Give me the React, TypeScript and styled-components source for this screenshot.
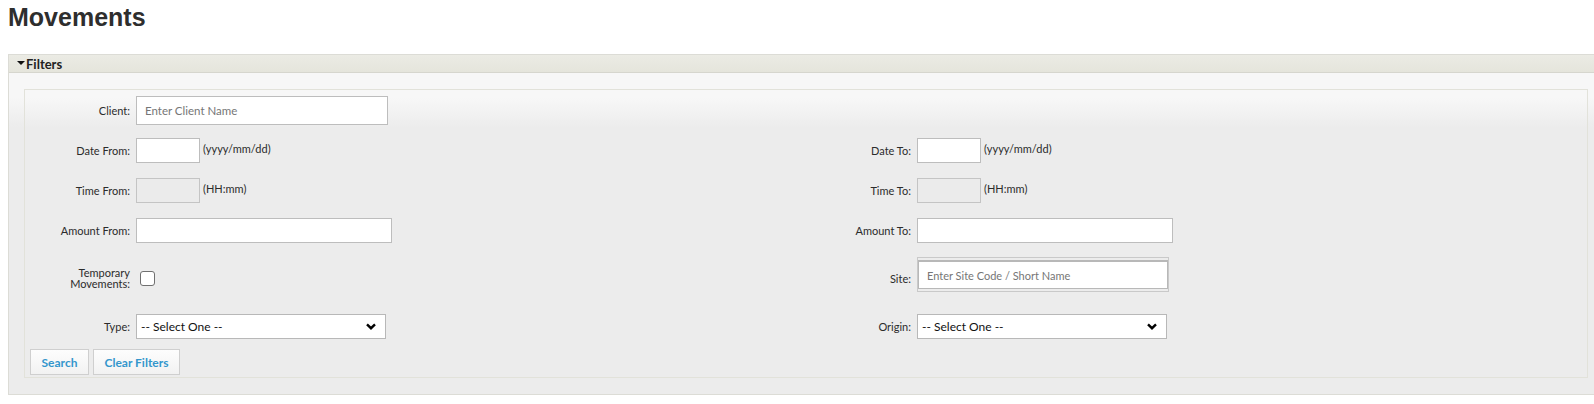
import React from "react";
import styled, { createGlobalStyle } from "styled-components";

const GlobalStyle = createGlobalStyle`
  html, body {
    margin: 0;
    padding: 0;
    background: #ffffff;
    overflow: hidden;
  }
  body {
    font-family: Lato, "Open Sans", sans-serif;
    color: #2b2b2b;
  }
`;

const Page = styled.div`
  padding: 2px 0 0 8px;
`;

const Title = styled.h1`
  margin: 0;
  font-family: "Liberation Sans", Arial, sans-serif;
  font-weight: bold;
  font-size: 25px;
  line-height: 30px;
  color: #2e2e2e;
`;

const Panel = styled.section`
  margin-top: 22px;
  margin-right: -10px;
  border: 1px solid #dcdcd6;
  display: flex;
  flex-direction: column;
`;

const PanelHeader = styled.div`
  height: 17px;
  display: flex;
  align-items: center;
  gap: 1px;
  padding-left: 8px;
  background: linear-gradient(to bottom, #ebebe4 0%, #e5e5dc 100%);
  border-bottom: 1px solid #d6d6ce;
  font-family: Lato, "Open Sans", sans-serif;
  font-weight: bold;
  font-size: 13px;
  color: #222222;
`;

const Caret = styled.span`
  width: 0;
  height: 0;
  border-left: 4px solid transparent;
  border-right: 4px solid transparent;
  border-top: 4px solid #111111;
  margin-top: -2px;
`;

const PanelBody = styled.div`
  padding: 16px 15px 16px 15px;
  background: linear-gradient(to bottom, #f7f7f7 0px, #f7f7f7 24px, #ececec 54px, #ececec 100%);
`;

const FilterBox = styled.div`
  border: 1px solid #e2e2da;
  padding: 0 5px 2px 5px;
  background: linear-gradient(to bottom, #f7f7f7 0px, #f7f7f7 8px, #ececec 38px, #ececec 100%);
`;

const FormGrid = styled.div`
  display: grid;
  grid-template-columns: 111px 1fr 111px 1fr;
  grid-template-rows: 41px 39px 40px 40px 56px 40px;
  margin: 0 -5px;
`;

const Label = styled.div`
  display: flex;
  align-items: center;
  justify-content: flex-end;
  text-align: right;
  padding-right: 6px;
  font-size: 11px;
  line-height: 11px;
  color: #2b2b2b;
`;

const Field = styled.div<{ $top?: boolean }>`
  display: flex;
  align-items: ${(p) => (p.$top ? "flex-start" : "center")};
  padding-top: ${(p) => (p.$top ? "7px" : "0")};
`;

const TextInput = styled.input<{ $w: number; $h: number }>`
  box-sizing: border-box;
  width: ${(p) => p.$w}px;
  height: ${(p) => p.$h}px;
  margin: 0;
  padding: 0 8px;
  border: 1px solid #bdbdbd;
  border-radius: 0;
  background: #ffffff;
  font-family: Lato, "Open Sans", sans-serif;
  font-size: 11.5px;
  color: #333333;
  outline: none;
  &::placeholder {
    color: #767676;
  }
  &:disabled {
    background: #ebebeb;
    border-color: #c4c4c4;
  }
`;

const Hint = styled.span`
  margin-left: 3px;
  margin-top: -4px;
  font-size: 11px;
  color: #2b2b2b;
`;

const Checkbox = styled.input`
  appearance: none;
  -webkit-appearance: none;
  box-sizing: border-box;
  width: 15px;
  height: 15px;
  margin: 0 0 0 4px;
  border: 1px solid #707070;
  border-radius: 3px;
  background: #ffffff;
`;

const SiteBox = styled.div`
  box-sizing: border-box;
  width: 252px;
  height: 35px;
  border: 1px solid #c9c9c9;
  padding-top: 2px;
  display: flex;
  flex-direction: column;
`;

const SiteInput = styled.input`
  box-sizing: border-box;
  width: 100%;
  height: 29px;
  margin: 0;
  padding: 0 8px;
  border: 1px solid #b8b8b8;
  border-top-width: 2px;
  background: #ffffff;
  font-family: Lato, "Open Sans", sans-serif;
  font-size: 11px;
  outline: none;
  &::placeholder {
    color: #767676;
  }
`;

const SelectWrap = styled.div`
  position: relative;
  width: 250px;
  height: 25px;
`;

const Select = styled.select`
  box-sizing: border-box;
  width: 100%;
  height: 100%;
  margin: 0;
  padding: 0 0 0 4px;
  appearance: none;
  -webkit-appearance: none;
  border: 1px solid #b8b8b8;
  border-radius: 0;
  background: #ffffff;
  font-family: Lato, "Open Sans", sans-serif;
  font-size: 12px;
  color: #111111;
  outline: none;
`;

const Chevron = styled.svg`
  position: absolute;
  right: 10px;
  top: 9px;
  pointer-events: none;
`;

const ButtonRow = styled.div`
  display: flex;
  gap: 4px;
  margin-top: 3px;
`;

const Button = styled.button<{ $w: number }>`
  box-sizing: border-box;
  width: ${(p) => p.$w}px;
  height: 26px;
  padding: 0;
  border: 1px solid #cfcfcf;
  border-radius: 0;
  background: linear-gradient(to bottom, #fdfdfd 0%, #f2f2f2 100%);
  font-family: Lato, "Open Sans", sans-serif;
  font-weight: bold;
  font-size: 12px;
  color: #3496cc;
  cursor: pointer;
`;

const SelectBox = ({ value }: { value: string }) => (
  <SelectWrap>
    <Select defaultValue="">
      <option value="">{value}</option>
    </Select>
    <Chevron width="10" height="7" viewBox="0 0 10 7">
      <polyline points="1,1.3 5,5.2 9,1.3" fill="none" stroke="#000" strokeWidth="2.4" />
    </Chevron>
  </SelectWrap>
);

export default function App() {
  return (
    <>
      <GlobalStyle />
      <Page>
        <Title>Movements</Title>
        <Panel>
          <PanelHeader>
            <Caret />
            <span>Filters</span>
          </PanelHeader>
          <PanelBody>
            <FilterBox>
              <FormGrid>
                <Label>Client:</Label>
                <Field>
                  <TextInput $w={252} $h={29} placeholder="Enter Client Name" />
                </Field>
                <Label />
                <Field />

                <Label>Date From:</Label>
                <Field>
                  <TextInput $w={64} $h={25} />
                  <Hint>(yyyy/mm/dd)</Hint>
                </Field>
                <Label>Date To:</Label>
                <Field>
                  <TextInput $w={64} $h={25} />
                  <Hint>(yyyy/mm/dd)</Hint>
                </Field>

                <Label>Time From:</Label>
                <Field>
                  <TextInput $w={64} $h={25} disabled />
                  <Hint>(HH:mm)</Hint>
                </Field>
                <Label>Time To:</Label>
                <Field>
                  <TextInput $w={64} $h={25} disabled />
                  <Hint>(HH:mm)</Hint>
                </Field>

                <Label>Amount From:</Label>
                <Field>
                  <TextInput $w={256} $h={25} />
                </Field>
                <Label>Amount To:</Label>
                <Field>
                  <TextInput $w={256} $h={25} />
                </Field>

                <Label>
                  Temporary
                  <br />
                  Movements:
                </Label>
                <Field>
                  <Checkbox type="checkbox" />
                </Field>
                <Label>Site:</Label>
                <Field $top>
                  <SiteBox>
                    <SiteInput placeholder="Enter Site Code / Short Name" />
                  </SiteBox>
                </Field>

                <Label>Type:</Label>
                <Field>
                  <SelectBox value="-- Select One --" />
                </Field>
                <Label>Origin:</Label>
                <Field>
                  <SelectBox value="-- Select One --" />
                </Field>
              </FormGrid>
              <ButtonRow>
                <Button $w={59}>Search</Button>
                <Button $w={87}>Clear Filters</Button>
              </ButtonRow>
            </FilterBox>
          </PanelBody>
        </Panel>
      </Page>
    </>
  );
}
